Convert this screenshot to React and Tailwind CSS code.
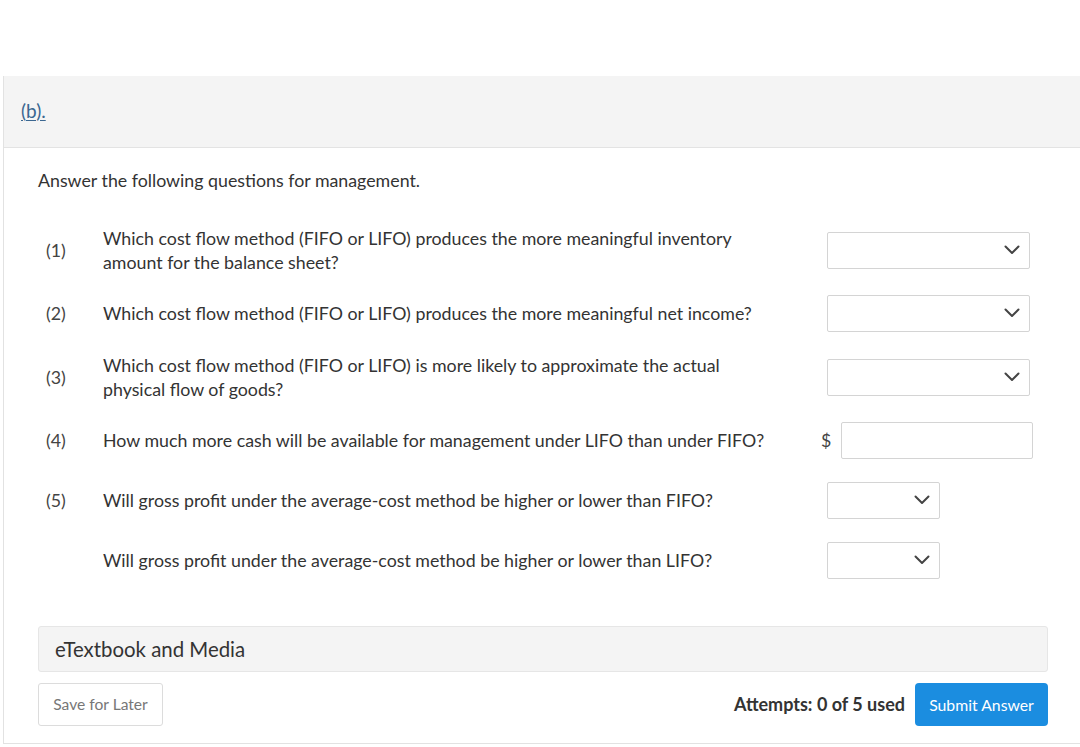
import React from 'react';

const font = { fontFamily: 'Lato, "Open Sans", sans-serif' };

const Chevron = () => (
  <svg width="16" height="10" viewBox="0 0 16 10" fill="none" className="text-[#444]">
    <path d="M1.5 1.5 8 8l6.5-6.5" stroke="currentColor" strokeWidth="2" strokeLinecap="round" strokeLinejoin="round" />
  </svg>
);

// fake select box — just a bordered field with the chevron on the right
const Select = ({ wide }) => (
  <div className={`${wide ? 'w-[203px]' : 'w-[113px]'} h-[37px] border border-[#d4d4d4] rounded-[2px] bg-white flex items-center justify-end pr-[9px]`}>
    <Chevron />
  </div>
);

const Row = ({ num, children, right, className = '' }) => (
  <div className={`flex items-center min-h-[48px] ${className}`}>
    <div className="w-[65px] pl-[8px] text-[17.8px] text-[#444] shrink-0">{num}</div>
    <div className="w-[724px] pr-[54px] shrink-0 text-[17.8px] leading-[24px] text-[#333]">{children}</div>
    {right}
  </div>
);

const App = () => {
  return (
    <div className="min-h-screen bg-white overflow-hidden" style={font}>
      <div className="h-[76px]" />
      <div className="ml-[3px] border-l border-b border-[#e2e2e2]">
        <div className="h-[72px] bg-[#f4f4f4] border-b border-[#e3e3e3] flex items-center pl-[17px]">
          <a href="#" className="text-[19px] text-[#3b6791] underline underline-offset-2">(b).</a>
        </div>

        <div className="pl-[34px] pr-[32px] pt-[20px] pb-[17px]">
          <p className="text-[17.8px] leading-[24px] text-[#333]">Answer the following questions for management.</p>

          <div className="mt-[34px]">
            <Row num="(1)" right={<Select wide />}>
              Which cost flow method (FIFO or LIFO) produces the more meaningful inventory amount for the balance sheet?
            </Row>
            <Row num="(2)" className="mt-[15px]" right={<Select wide />}>
              Which cost flow method (FIFO or LIFO) produces the more meaningful net income?
            </Row>
            <Row num="(3)" className="mt-[16px]" right={<Select wide />}>
              Which cost flow method (FIFO or LIFO) is more likely to approximate the actual physical flow of goods?
            </Row>
            <div className="flex items-center min-h-[48px] mt-[15px]">
              <div className="w-[65px] pl-[8px] text-[17.8px] text-[#444] shrink-0">(4)</div>
              <div className="w-[718px] shrink-0 text-[17.8px] leading-[24px] text-[#333]">
                How much more cash will be available for management under LIFO than under FIFO?
              </div>
              <span className="w-[20px] text-[17.8px] text-[#444]">$</span>
              <div className="w-[192px] h-[37px] border border-[#d4d4d4] rounded-[2px] bg-white" />
            </div>
            <Row num="(5)" className="mt-[12px]" right={<Select />}>
              Will gross profit under the average-cost method be higher or lower than FIFO?
            </Row>
            <Row num="" className="mt-[12px]" right={<Select />}>
              Will gross profit under the average-cost method be higher or lower than LIFO?
            </Row>
          </div>

          <div className="mt-[42px] h-[46px] bg-[#f4f4f4] border border-[#e6e6e6] rounded-[3px] flex items-center pl-[16px]">
            <span className="text-[20.4px] text-[#333]">eTextbook and Media</span>
          </div>

          <div className="mt-[11px] flex items-center">
            <button className="h-[43px] w-[125px] border border-[#dcdcdc] rounded-[3px] bg-white text-[15.6px] text-[#777]">
              Save for Later
            </button>
            <div className="ml-auto flex items-center gap-[10px]">
              <span className="text-[18px] font-bold text-[#333]">Attempts: 0 of 5 used</span>
              <button className="h-[43px] w-[133px] rounded-[4px] bg-[#1b8de0] text-[15.8px] text-white">
                Submit Answer
              </button>
            </div>
          </div>
        </div>
      </div>
    </div>
  );
};

export default App;
